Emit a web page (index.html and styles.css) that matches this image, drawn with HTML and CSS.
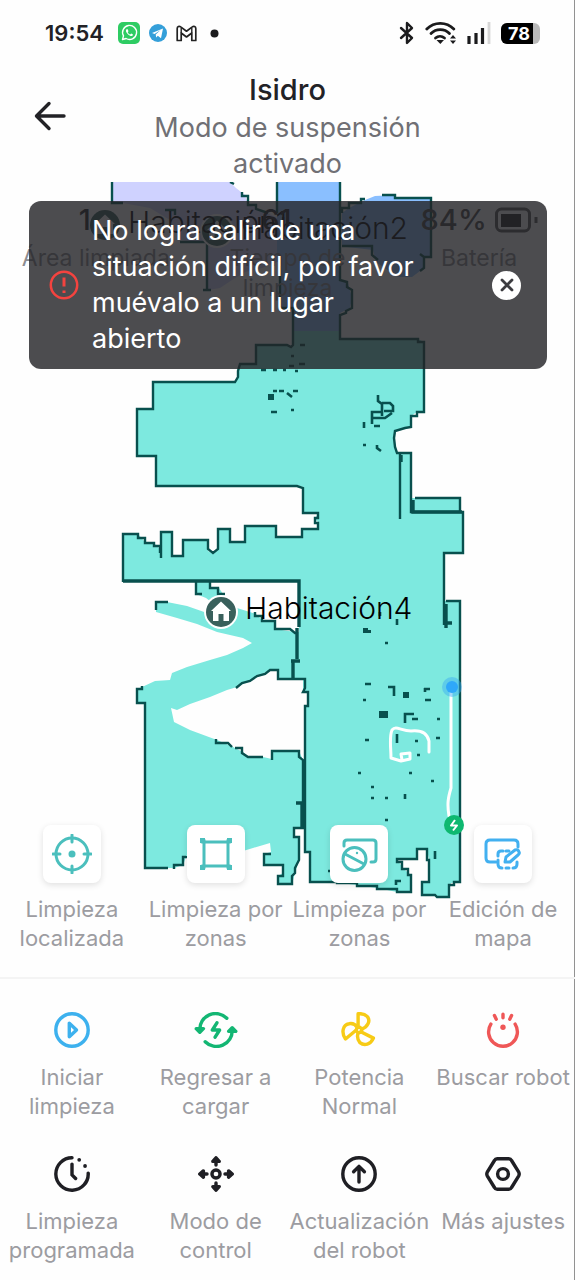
FILE: index.html
```html
<!DOCTYPE html>
<html lang="es">
<head>
<meta charset="utf-8">
<meta name="viewport" content="width=device-width, initial-scale=1">
<title>Isidro</title>
<link rel="stylesheet" href="styles.css">
</head>
<body>
<div class="app">
  <div class="status">
    <div class="status-group">
      <span class="clock">19:54</span>
      <svg width="22" height="22" viewBox="0 0 22 22"><rect width="22" height="22" rx="5" fill="#2ecc63"/><path d="M4.500 17.500l1-3.600a7 7 0 1 1 2.600 2.600z" fill="none" stroke="#fff" stroke-width="1.400" stroke-linejoin="round"/><path d="M8.600 7.200c-1.400 1-.6 3.200 1.300 5 1.800 1.700 4 2.500 5 1 .3-.6 0-.8-1.700-1.600l-1 1c-1-.4-2-1.400-2.500-2.400l.8-1c-.7-1.800-1-2.400-1.900-2z" fill="#fff"/></svg>
      <svg width="18" height="18" viewBox="0 0 18 18"><circle cx="9" cy="9" r="9" fill="#349fd9"/><path d="M3 9l11-4.600-2 9.800-3.200-2.400-1.600 1.600-.5-3 5-4.500-6.200 4z" fill="#fff"/></svg>
      <svg width="21" height="17" viewBox="0 0 21 17"><path d="M1.200 15.500V3.500c0-2 2-2.800 3.500-1.600l5.800 4.300 5.800-4.300c1.500-1.200 3.500-.4 3.500 1.600v12h-4V8l-5.300 4L5.200 8v7.500z" fill="#fff" stroke="#222" stroke-width="1.700" stroke-linejoin="round"/><path d="M5.200 8V3M15.800 8V3" stroke="#222" stroke-width="1.400"/></svg>
      <svg class="more" width="9" height="9" viewBox="0 0 9 9"><circle cx="4.500" cy="4.500" r="4" fill="#1b1b1d"/></svg>
    </div>
    <div class="status-group status-right">
      <svg width="16" height="24" viewBox="0 0 16 24"><path d="M2 7l11 10-5 5V2l5 5L2 17" fill="none" stroke="#1b1b1d" stroke-width="2.400" stroke-linejoin="round" stroke-linecap="round"/></svg>
      <svg width="32" height="24" viewBox="0 0 32 24"><g fill="none" stroke="#1b1b1d" stroke-width="2.800" stroke-linecap="round"><path d="M1.800 8a19 19 0 0 1 27 0"/><path d="M6 12.500a13 13 0 0 1 18.500 0"/><path d="M10.500 17a7 7 0 0 1 9 0"/></g><path d="M11.500 19h7.500l-3.700 4z" fill="#1b1b1d"/><path d="M25 17.500l3-3.500 3 3.500zM25 19.500l3 3.500 3-3.500z" fill="#1b1b1d"/></svg>
      <svg width="24" height="22" viewBox="0 0 24 22"><path d="M2 22v-8M9 22V11M15.500 22V6" stroke="#1b1b1d" stroke-width="3.200"/><path d="M22 22V0" stroke="#d6d6d6" stroke-width="2.800"/></svg>
      <span class="battery"><span class="battery-level">78</span></span>
    </div>
  </div>

  <header class="header">
    <button class="back" aria-label="Volver"><svg width="32" height="30" viewBox="0 0 32 30"><path d="M30 15H3M15 2.500L2.500 15 15 27.500" fill="none" stroke="#222226" stroke-width="3.400" stroke-linecap="round" stroke-linejoin="round"/></svg></button>
    <div class="heading">
      <h1 class="title">Isidro</h1>
      <p class="subtitle">Modo de suspensión activado</p>
    </div>
  </header>

  <main class="stage">
    <svg class="map" viewBox="0 182 575 795">
      <path class="lav" d="M112 182H230L236 188L245 195L248 205L257 208L267 213L277 218V262L262 268L245 272L232 280L220 288L208 290V243L180 240L170 220L150 208L123 203H112Z"/>
      <path class="blue" d="M277 182H340V280L348 283L352 298L350 308L340 313V332H293V308H280V262H277Z"/>
      <path class="blue" d="M342 213L349 208L365 200L375 196L395 195V198H431V257H424V268L412 277H398L376 262L373 250L347 247L342 246Z"/>
      <path class="teal" d="M340 331V339H418L424 342V412H417L411 416V427L395 431L393 438L395 447L397 453H412V498H460V512H463V553H444V601H460V882L451 883L448 897H437L435 895H422V882H429V860L427 849H417V859L397 860L405 870L411 875V892H397L377 888L357 885L333 882H310V852H305V706L308 705V692H303V678H277V670H270L237 687L227 690L210 697L190 704L177 710L171 708L174 722L190 730L217 740L233 747L243 752L248 757H263L272 759V751H299L303 760V828H294V837H299V860L295 873L292 884H278V876L283 873V865H264V854L271 852L270 843L253 848L243 851L215 857H186L183 865L174 868H145V703H137V689L142 687L155 681L170 680L172 673L187 667L210 660L227 655L243 648L252 643L243 638L217 632L197 624L177 618L156 612V602H167L187 606L207 613L215 605L206 598L196 594V582H210V588H219L223 594L237 608L256 614L263 621H275V629L295 632H299V581H123V534H138L145 542L157 545L161 552V532H172V556H183V540H207L208 551L212 553L217 551L218 529H229L230 542H245V526H275V537H302V529L318 528V522L315 519L318 513H303V487L297 485H156V456H137V409H153V382H236L238 371L240 364H256V345H287L291 347L294 345V331Z"/>
      <g class="wall">
        <path d="M112 182V203H123M230 182L234 184M242 192V196H248V205H256V209L268 213M165 210H175V215M207 243V290M203 290H211M180 242H206"/>
        <path d="M277 182V213M280 262V308H293V345L291 347L287 345H256V364H240L238 371V377L235 382H153V409H137V456H156V486H297L303 488V513H318V518H315V523H318V529H302V537H276V526H245V542H230V529H218V549L213 553L208 549V540H183V556H172V532H161V558M160 553V546H154V543H145V538H138V534H123V582"/>
        <path d="M340 182V280L347 282V287L352 290V308L346 311V313L340 315V339H418V342H424V412H417V416H411V427L405 428L395 431L394 438L395 447L397 453H411V512H463V553H444V625M400 454V519M415 498H460V512M446 601H460V882H454V885H449V897H437L435 895H422V882H429V860H427V849H417V859H397V862H402V869H408V875H411V892H397V889H377V886H357V883H337V882H310V852H305V706H308V692H303L305 688V679H278V670H270L265 674L257 676L250 681L242 683L236 688"/>
        <path d="M342 213V208H349V203H361V199H365M382 195H395V198H431V257H424V268L420 271M342 246H372V255L378 260M420 254L424 257"/>
        <path d="M216 739V743H228L232 747M235 748H242V753L248 757H263M272 760V751H299V757L303 760V828H294V837H299V860L295 868V873L292 876V884H278V876H283V865H264V854H271M186 856V857H183V865H174V869M168 868H145V703H137V689H142V686"/>
        <path d="M156 610V602H168M202 594H196V582M210 582V588H218V594H225M255 612V616H262V621H275V629H290L295 633H298"/>
      </g>
      <g class="wall-thick">
        <path d="M123 581H299V627M413 500V512H462M297 628V659M291 661H300M293 660V678M302 803V828M296 803H302M446 604V628M444 623H452M401 455V462"/>
      </g>
      <g class="speck">
        <path d="M261 370h5M273 370h4M283 370h3M295 371h3M299 364h6M289 366h5M300 345h5M291 356h3M273 391h4M279 391h5M287 393l5 4M293 391h5M291 410h3M271 412h6M378 395v6l4 3v12M382 403h8l3 3v5h-9M372 424v-12h9M373 418h12l7-5M364 422v6M374 426h6M363 445h3M377 445v3l4 3M380 612v4M397 619v6M385 643h3M365 684h6M388 687h6v9M363 700h3M425 692v-4M424 689h6M425 700h6M405 723v-9h9M412 719h6M437 719h3M365 740h4M397 734v9M415 741h3M436 738h4M417 755h3M358 773h3M409 773h3M431 781h3M371 787h3M371 798h3M385 798h3M405 794v5M385 820h3M435 851v8M328 871h3M396 885v-4h5"/>
      </g>
      <path d="M363 628h5v2h3v3h-8zM403 692h6v6h-6zM379 711h9v7h-9zM268 394h6v6h-6z" fill="#08504e"/>
      <path class="trail" d="M451 690V788C448 798 447 804 449 816M429 752V741C427 732 420 730 411 731C401 731 396 725 392 730C389 737 391 748 391 758L401 761L410 759V753L401 754L402 760"/>
      <circle cx="452" cy="687" r="10" fill="#3aa8f5" opacity=".45"/><circle cx="452" cy="687" r="6" fill="#2fa8fa"/>
      <circle cx="454" cy="825" r="10" fill="#0eb870"/><path d="M455 820l-4 5.500h6l-4 5" fill="none" stroke="#fff" stroke-width="2" stroke-linejoin="round"/>
      <g id="home"><circle cx="221" cy="612" r="17" fill="#fff"/><circle cx="221" cy="612" r="15" fill="#39605c"/><path d="M221 601.500l-10 9.500h2v10h5.500v-7h5v7h5.500v-10h2z" fill="#fff"/></g>
      <use href="#home" x="-116" y="-387"/><use href="#home" x="-4" y="-381"/>
      <text class="room" x="245" y="619">Habitación4</text>
      <text class="room" x="128" y="233">Habitación1</text>
      <text class="room" x="241" y="239">Habitación2</text>
    </svg>

    <div class="overlay">
      <dl class="stats">
        <div class="stat"><dd class="stat-value stat-count">1</dd><dt class="stat-label">Área limpiada</dt></div>
        <div class="stat"><dd class="stat-value stat-count">61</dd><dt class="stat-label">Tiempo de limpieza</dt></div>
        <div class="stat"><dd class="stat-value">84%<svg width="43" height="26" viewBox="0 0 43 26"><rect x="1.500" y="2" width="33" height="22" rx="5" fill="none" stroke="#555" stroke-width="3"/><rect x="6" y="7" width="20" height="13" fill="#222"/><path d="M41 10v6" stroke="#555" stroke-width="3"/></svg></dd><dt class="stat-label">Batería</dt></div>
      </dl>
      <nav class="tools">
        <button class="item"><span class="card"><svg class="icon teal-line" viewBox="0 0 40 40"><circle cx="20" cy="20" r="16"/><path d="M20 1v7M20 32v7M1 20h7M32 20h7"/><circle cx="20" cy="20" r="3.500" fill="#4bbfbd" stroke="none"/></svg></span><span class="label">Limpieza localizada</span></button>
        <button class="item"><span class="card"><svg class="icon teal-line" viewBox="0 0 40 40"><path d="M8 6v28M32 6v28M6 8h28M6 32h28"/><path d="M4 4h5v5H4zM31 4h5v5h-5zM4 31h5v5H4zM31 31h5v5h-5z" fill="#4bbfbd" stroke="none"/></svg></span><span class="label">Limpieza por zonas</span></button>
        <button class="item"><span class="card"><svg class="icon teal-line" viewBox="0 0 40 40"><path d="M5 12V9q0-3 3-3h26q3 0 3 3v16q0 3-3 3h-2"/><circle cx="15.500" cy="25" r="11.500"/><path d="M6 20l19 10"/><circle cx="18" cy="19" r="1.200" fill="#4bbfbd" stroke="none"/></svg></span><span class="label">Limpieza por zonas</span></button>
        <button class="item"><span class="card"><svg class="icon blue-line" viewBox="0 0 40 40"><path d="M13 28H7q-4 0-4-4V10q0-4 4-4h24q4 0 4 4v3"/><path d="M20 17h-2q-3 0-3 3v2M15 26v4q0 4 4 4M23 34h3M30 34q4 0 4-4v-2M23 17h3"/><path d="M22 28l1-5 9-7q3-1 4 2 1 1-1 3l-8 7z"/></svg></span><span class="label">Edición de mapa</span></button>
      </nav>
    </div>

    <div class="toast" role="alert">
      <svg class="toast-icon" width="30" height="30" viewBox="0 0 30 30"><circle cx="15" cy="15" r="13.200" fill="none" stroke="#f4433f" stroke-width="2.500"/><path d="M15 7.500v9M15 20.500v2.500" stroke="#f4433f" stroke-width="3"/></svg>
      <p class="toast-text">No logra salir de una situación difícil, por favor muévalo a un lugar abierto</p>
      <button class="close" aria-label="Cerrar"><svg width="14" height="14" viewBox="0 0 14 14"><path d="M2 2l10 10M12 2L2 12" stroke="#3c3c40" stroke-width="2.800" stroke-linecap="round"/></svg></button>
    </div>
  </main>

  <nav class="actions">
    <button class="item"><svg class="icon" viewBox="0 0 40 40" stroke="#3db1ee"><circle cx="20" cy="20" r="18"/><path d="M17 12.500v15l8-7.500z"/></svg><span class="label">Iniciar limpieza</span></button>
    <button class="item"><svg class="icon wide" viewBox="-4 0 48 40" stroke="#13b673"><path d="M32 7A17.500 17.500 0 0 0 2 20M8 33A17.500 17.500 0 0 0 38 20M21 12l-5 8h8l-5 8"/><path d="M-2 18.500l4 4 4-4zM34 21.500l4-4 4 4z" fill="#13b673"/></svg><span class="label">Regresar a cargar</span></button>
    <button class="item"><svg class="icon" viewBox="0 0 40 40" stroke="#f7cb16"><circle cx="20" cy="20" r="3"/><path d="M19 17V2C28 1 33 7 30 13Q28 17 23 19M17 20L5 30C0 23 2 14 9 13Q15 12 18 17M22 22L36 29C33 36 26 38 21 34Q17 29 19 23"/></svg><span class="label">Potencia Normal</span></button>
    <button class="item"><svg class="icon" viewBox="0 0 40 40" stroke="#ef5757"><path d="M6.500 13.500A16 16 0 1 0 33.500 13.500M20 2.500v4M10.500 4l2 4M29.500 4l-2 4"/><circle cx="20" cy="17" r="3" fill="#ef5757" stroke="none"/></svg><span class="label">Buscar robot</span></button>
    <button class="item"><svg class="icon" viewBox="0 0 40 40" stroke="#1f1f24"><path d="M20 2A18 18 0 1 0 38 19M20 9v12l4 4"/><path d="M28 4.200v.1M34.500 11v.1" stroke-width="4.200"/></svg><span class="label">Limpieza programada</span></button>
    <button class="item"><svg class="icon" viewBox="0 0 40 40" stroke="#1f1f24"><circle cx="20" cy="20" r="4.500"/><path d="M20 10V4M20 30v6M10 20H4M30 20h6"/><path d="M16.500 6L20 2l3.500 4zM16.500 34l3.500 4 3.500-4zM6 16.500L2 20l4 3.500zM34 16.500l4 3.500-4 3.500z" fill="#1f1f24"/></svg><span class="label">Modo de control</span></button>
    <button class="item"><svg class="icon" viewBox="0 0 40 40" stroke="#1f1f24"><circle cx="20" cy="20" r="18"/><path d="M20 29V12M14 17.500l6-6 6 6"/></svg><span class="label">Actualización del robot</span></button>
    <button class="item"><svg class="icon" viewBox="0 0 40 40" stroke="#1f1f24"><path d="M13.500 3h13q2 0 3 2l8 13q1 2 0 4l-8 13q-1 2-3 2h-13q-2 0-3-2l-8-13q-1-2 0-4l8-13q1-2 3-2z"/><circle cx="20" cy="20" r="6"/></svg><span class="label">Más ajustes</span></button>
  </nav>
</div>
</body>
</html>
```
FILE: styles.css
```css
* { box-sizing: border-box; }
body { margin: 0; background: #fefefe; font-family: Inter, "Noto Sans", sans-serif; color: #222226; }
h1, p, dl, dd { margin: 0; }
button { border: 0; padding: 0; background: none; font: inherit; color: inherit; cursor: pointer; }
svg { display: block; flex: none; }

.app { min-height: 100vh; box-shadow: inset -1px 0 #929292; }

.status { display: flex; justify-content: space-between; align-items: center; height: 64px; padding: 2px 35px 0 45px; }
.status-group { display: flex; align-items: center; gap: 9px; }
.clock { font-size: 22px; font-weight: 600; margin-right: 5px; }
.more { margin-left: 4px; }
.status-right { gap: 10px; }
.battery { display: flex; width: 39px; height: 21px; border-radius: 6px; background: #b9b9b9; overflow: hidden; }
.battery-level { width: 32px; background: #000; color: #fff; font-size: 18px; font-weight: 700; line-height: 21px; padding-left: 7px; }

.header { display: grid; grid-template-columns: 100px 1fr 100px; padding-top: 8px; }
.back { display: grid; place-items: center; height: 88px; }
.heading { display: grid; gap: 2px; text-align: center; }
.title { font-size: 29px; line-height: 36px; font-weight: 500; }
.subtitle { max-width: 300px; justify-self: center; font-size: 27px; line-height: 36px; color: #707075; }

.stage { display: grid; position: relative; border-bottom: 2px solid #f4f4f4; }
.map, .overlay { grid-area: 1 / 1; }
.map { width: 100%; height: auto; }
.lav { fill: #cfd2ff; }
.blue { fill: #8abfff; }
.teal { fill: #7de9df; }
.wall, .wall-thick, .speck { fill: none; stroke: #08504e; stroke-width: 2.400; }
.wall-thick { stroke-width: 3.400; }
.speck { stroke-width: 2.600; }
.trail { fill: none; stroke: #fff; stroke-width: 3; stroke-linecap: round; stroke-linejoin: round; }
.room { font-size: 30px; font-weight: 300; fill: #000; }

.overlay { display: flex; flex-direction: column; justify-content: space-between; padding: 19px 0 24px; }
.stats { display: grid; grid-template-columns: repeat(3, 1fr); text-align: center; }
.stat { padding: 0 16px; }
.stat-value { display: flex; justify-content: center; align-items: center; gap: 8px; font-size: 29px; line-height: 38px; font-weight: 500; color: #444; }
.stat-count { padding-right: 22px; color: #222226; }
.stat-label { font-size: 23px; line-height: 30px; color: #8c8c90; margin-top: 4px; }

.tools, .actions { display: grid; grid-template-columns: repeat(4, minmax(0, 1fr)); }
.item { display: flex; flex-direction: column; align-items: center; gap: 15px; min-width: 0; }
.tools .item { gap: 12px; }
.card { display: grid; place-items: center; width: 58px; height: 58px; border-radius: 8px; background: #fff; box-shadow: 0 2px 6px rgba(0, 0, 0, .12); }
.icon { width: 36px; height: 36px; fill: none; stroke-width: 3.800; stroke-linecap: round; stroke-linejoin: round; }
.icon.wide { width: 44px; }
.card .icon { width: 40px; height: 40px; stroke-width: 3; }
.teal-line { stroke: #4bbfbd; }
.blue-line { stroke: #42b0f0; }
.label { font-size: 22px; line-height: 29px; color: #9c9ca1; text-align: center; }

.actions { padding: 33px 0 14px; row-gap: 35px; }

.toast { position: absolute; top: 19px; left: 29px; right: 28px; display: flex; align-items: center; padding: 12px 26px 12px 20px; border-radius: 12px; background: rgba(34, 34, 38, .81); color: #fff; }
.toast-text { flex: 1; max-width: 330px; margin-left: 13px; font-size: 27px; line-height: 36px; }
.close { display: grid; place-items: center; width: 29px; height: 29px; margin-left: auto; border-radius: 50%; background: #fff; }
```
